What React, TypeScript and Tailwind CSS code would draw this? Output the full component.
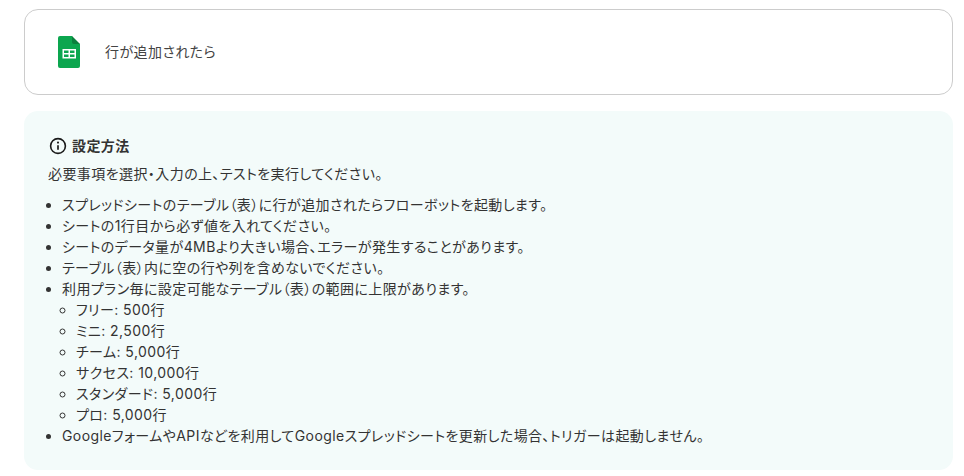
const plans = ['フリー: 500行', 'ミニ: 2,500行', 'チーム: 5,000行', 'サクセス: 10,000行', 'スタンダード: 5,000行', 'プロ: 5,000行']

function SheetsIcon() {
  return (
    <svg width="22" height="32" viewBox="0 0 22 32" className="shrink-0">
      <path d="M14 0H2a2 2 0 0 0-2 2v28a2 2 0 0 0 2 2h18a2 2 0 0 0 2-2V8l-6-2z" fill="#0ca64f" />
      <path d="M14 0l8 8h-6a2 2 0 0 1-2-2z" fill="#0b7f3d" />
      <path d="M4.500 13h13.500v9.500H4.500z M6 14.500v2.500h4.500v-2.500z M12 14.500v2.500h4.500v-2.500z M6 18.500v2.500h4.500v-2.500z M12 18.500v2.500h4.500v-2.500z" fill="#fff" fillRule="evenodd" />
    </svg>
  )
}

function InfoIcon() {
  return (
    <svg width="18" height="18" viewBox="0 0 18 18" fill="none" stroke="#1a1a1a" className="shrink-0">
      <circle cx="9" cy="9" r="7.400" strokeWidth="1.600" />
      <path d="M9 8.200v4.600" strokeWidth="1.700" />
      <circle cx="9" cy="5.600" r="1.050" fill="#1a1a1a" stroke="none" />
    </svg>
  )
}

export default function App() {
  return (
    <div className="w-[964px] h-[476px] overflow-hidden bg-white pt-[9px] pl-6 pr-[11px] text-[14px] leading-[21px] tracking-[0.03em] text-[#333333] [font-feature-settings:'palt'] font-['Inter','Noto_Sans_CJK_JP',sans-serif]">
      <div className="flex h-[86px] items-center gap-[25px] rounded-[14px] border border-[#cccccc] pl-[33px]">
        <SheetsIcon />
        <span className="-mt-[2px] text-[#444444]">行が追加されたら</span>
      </div>
      <div className="mt-4 h-[359px] rounded-[14px] bg-[#f3fbfa] pl-6 pt-[24px]">
        <div className="flex items-center gap-[5px] pl-[1px] font-bold">
          <InfoIcon />
          <span>設定方法</span>
        </div>
        <p className="mt-[7px]">必要事項を選択・入力の上、テストを実行してください。</p>
        <ul className="mt-[10px] list-disc pl-[14px]">
          <li>スプレッドシートのテーブル（表）に行が追加されたらフローボットを起動します。</li>
          <li>シートの1行目から必ず値を入れてください。</li>
          <li>シートのデータ量が4MBより大きい場合、エラーが発生することがあります。</li>
          <li>テーブル（表）内に空の行や列を含めないでください。</li>
          <li>
            利用プラン毎に設定可能なテーブル（表）の範囲に上限があります。
            <ul className="list-[circle] pl-[14px]">
              {plans.map((plan) => (
                <li key={plan}>{plan}</li>
              ))}
            </ul>
          </li>
          <li>GoogleフォームやAPIなどを利用してGoogleスプレッドシートを更新した場合、トリガーは起動しません。</li>
        </ul>
      </div>
    </div>
  )
}
